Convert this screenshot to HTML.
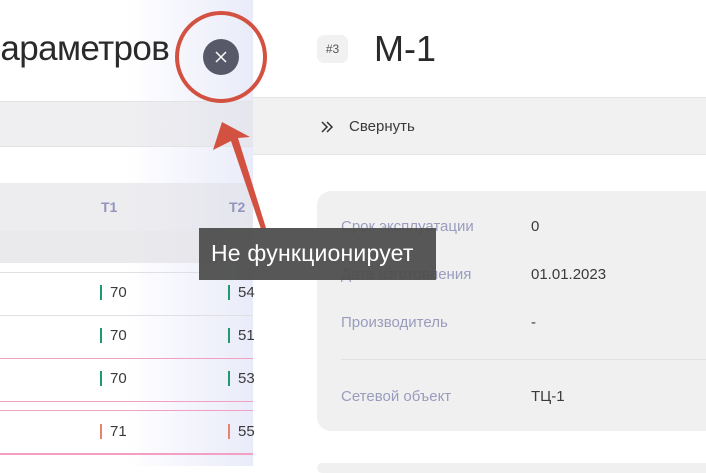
<!DOCTYPE html>
<html><head><meta charset="utf-8"><style>
*{margin:0;padding:0;box-sizing:border-box}
body{width:706px;height:466px;overflow:hidden;position:relative;background:#fff;font-family:"Liberation Sans","DejaVu Sans",sans-serif}
.abs{position:absolute}
.left{left:0;top:0;width:253px;height:466px;background:linear-gradient(90deg,#fff 0%,#fff 50%,#e9ebf9 100%)}
.t{color:#3a3a3a;font-size:15px}
.lab{color:#9a9cbd;font-size:15px}
</style></head><body>
<div class="abs left">
  <div class="abs" style="left:-18px;top:29px;font-size:35px;color:#2a2a2a;letter-spacing:-0.6px">параметров</div>
  <div class="abs" style="left:0;top:101px;width:253px;height:46px;background:rgba(225,225,230,.55);border-top:1px solid #e3e3e6;border-bottom:1px solid #e3e3e6"></div>
  <div class="abs" style="left:0;top:183px;width:253px;height:48px;background:rgba(225,225,230,.6)"></div>
  <div class="abs" style="left:0;top:231px;width:253px;height:32px;background:rgba(225,225,230,.7)"></div>
  <div class="abs" style="left:101px;top:199px;font-size:14px;font-weight:bold;color:#9294bb">T1</div>
  <div class="abs" style="left:229px;top:199px;font-size:14px;font-weight:bold;color:#9294bb">T2</div>
  <div class="abs" style="left:0;top:272px;width:253px;height:1px;background:#e0e0e4"></div>
  <div class="abs" style="left:0;top:315px;width:253px;height:1px;background:#e0e0e4"></div>
  <div class="abs" style="left:0;top:358px;width:253px;height:1px;background:#f0a0c0"></div>
  <div class="abs" style="left:0;top:401px;width:253px;height:1px;background:#f0a0c0"></div>
  <div class="abs" style="left:0;top:410px;width:253px;height:1px;background:#f0a0c0"></div>
  <div class="abs" style="left:0;top:453px;width:253px;height:2px;background:#f4a0c4"></div>
  <div class="abs" style="left:100px;top:285px;width:2px;height:15px;background:#1e9b6e"></div>
  <div class="abs t" style="left:110px;top:284px">70</div>
  <div class="abs" style="left:228px;top:285px;width:2px;height:15px;background:#1e9b6e"></div>
  <div class="abs t" style="left:238px;top:284px">54</div>
  <div class="abs" style="left:100px;top:328px;width:2px;height:15px;background:#1e9b6e"></div>
  <div class="abs t" style="left:110px;top:327px">70</div>
  <div class="abs" style="left:228px;top:328px;width:2px;height:15px;background:#1e9b6e"></div>
  <div class="abs t" style="left:238px;top:327px">51</div>
  <div class="abs" style="left:100px;top:371px;width:2px;height:15px;background:#1e9b6e"></div>
  <div class="abs t" style="left:110px;top:370px">70</div>
  <div class="abs" style="left:228px;top:371px;width:2px;height:15px;background:#1e9b6e"></div>
  <div class="abs t" style="left:238px;top:370px">53</div>
  <div class="abs" style="left:100px;top:424px;width:2px;height:15px;background:#e8846e"></div>
  <div class="abs t" style="left:110px;top:423px">71</div>
  <div class="abs" style="left:228px;top:424px;width:2px;height:15px;background:#e8846e"></div>
  <div class="abs t" style="left:238px;top:423px">55</div>
  <div class="abs" style="left:203px;top:39px;width:36px;height:36px;border-radius:50%;background:#575969"></div>
  <svg class="abs" style="left:203px;top:39px" width="36" height="36"><path d="M13 13L23 23M23 13L13 23" stroke="#fff" stroke-width="1.5"/></svg>
</div>
<div class="abs" style="left:317px;top:35px;width:31px;height:28px;border-radius:7px;background:#f1f1f1;color:#555;font-size:12px;line-height:28px;text-align:center">#3</div>
<div class="abs" style="left:374px;top:28px;font-size:36px;color:#2a2a2a">М-1</div>
<div class="abs" style="left:253px;top:97px;width:453px;height:58px;background:#f1f1f1;border-top:1px solid #e4e4e4;border-bottom:1px solid #e4e4e4"></div>
<svg class="abs" style="left:320px;top:120px" width="14" height="14"><path d="M2 2l5 5-5 5M7 2l5 5-5 5" stroke="#333" stroke-width="1.5" fill="none"/></svg>
<div class="abs t" style="left:349px;top:118px">Свернуть</div>
<div class="abs" style="left:317px;top:191px;width:420px;height:240px;border-radius:14px;background:#f0f0f0"></div>
<div class="abs lab" style="left:341px;top:218px">Срок эксплуатации</div>
<div class="abs t" style="left:531px;top:218px">0</div>
<div class="abs lab" style="left:341px;top:266px">Дата изготовления</div>
<div class="abs t" style="left:531px;top:266px">01.01.2023</div>
<div class="abs lab" style="left:341px;top:314px">Производитель</div>
<div class="abs t" style="left:531px;top:314px">-</div>
<div class="abs" style="left:341px;top:359px;width:365px;height:1px;background:#e0e0e0"></div>
<div class="abs lab" style="left:341px;top:388px">Сетевой объект</div>
<div class="abs t" style="left:531px;top:388px">ТЦ-1</div>
<div class="abs" style="left:317px;top:463px;width:420px;height:10px;border-radius:14px;background:#f0f0f0"></div>
<svg class="abs" style="left:0;top:0" width="706" height="466">
  <circle cx="221" cy="57" r="44" fill="none" stroke="#d35140" stroke-width="4"/>
  <polygon points="222,122 250,137 238,138 266,228 261,229 231,141 213,150" fill="#d35140"/>
</svg>
<div class="abs" style="left:199px;top:228px;width:237px;height:52px;background:rgba(78,78,78,.95);color:#fff;font-size:23px;line-height:50px;padding-left:12px;white-space:nowrap;letter-spacing:0.2px">Не функционирует</div>
</body></html>
